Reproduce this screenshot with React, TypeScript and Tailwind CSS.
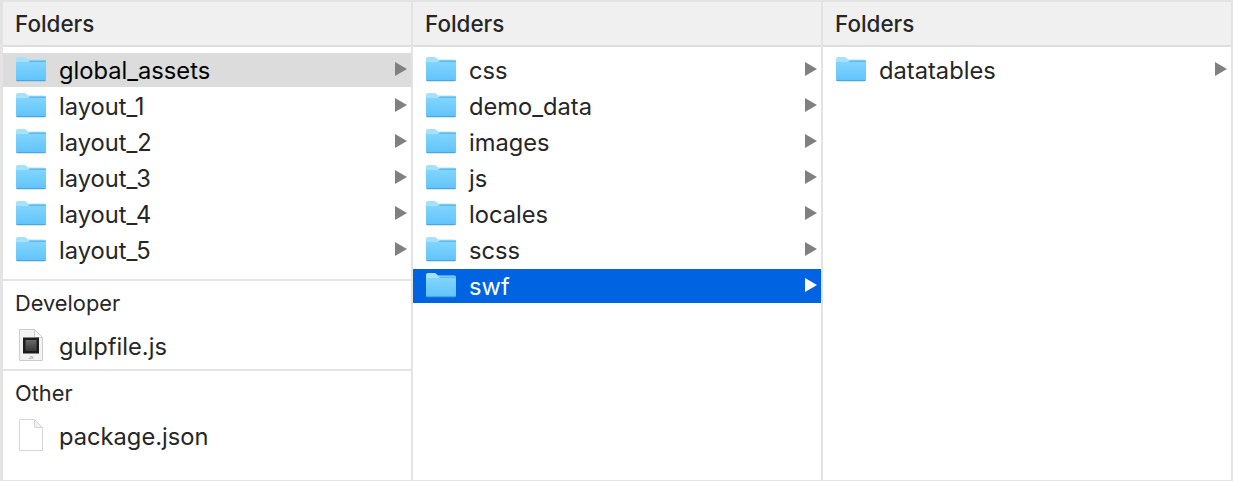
import type { ReactNode } from 'react';

const firstFolders = ['global_assets', 'layout_1', 'layout_2', 'layout_3', 'layout_4', 'layout_5'];
const secondFolders = ['css', 'demo_data', 'images', 'js', 'locales', 'scss', 'swf'];

function FolderIcon() {
  return (
    <svg width="34" height="34" viewBox="3 0 34 34" className="shrink-0">
      <defs>
        <linearGradient id="folderBody" x1="0" y1="0" x2="0" y2="1">
          <stop offset="0" stopColor="#7fd5fd" />
          <stop offset="1" stopColor="#62c3fa" />
        </linearGradient>
      </defs>
      <path d="M4 6c0-1.200.8-2 2-2h6.500c.8 0 1.300.3 1.900.9L16 6.500h16c1.200 0 2 .8 2 2V15H4z" fill="#a6e1fb" />
      <path d="M4 9h30v17c0 1.200-.8 2-2 2H6c-1.200 0-2-.8-2-2z" fill="url(#folderBody)" />
      <path d="M4 9h12.500L18 7.500h16V9H4z" fill="#5ab9ee" />
      <path d="M4 27h30c-.2.800-1 1.300-2 1.300H6c-1 0-1.800-.5-2-1.300z" fill="#4ca6dd" />
    </svg>
  );
}

function JsFileIcon() {
  return (
    <svg width="32" height="34" viewBox="3 0 32 34" className="shrink-0">
      <defs>
        <linearGradient id="jsInner" x1="0" y1="0" x2="0" y2="1">
          <stop offset="0" stopColor="#6a6a6a" />
          <stop offset="1" stopColor="#383838" />
        </linearGradient>
      </defs>
      <path d="M7.500 1.500h15l8 8v23h-23z" fill="#f3f3f3" stroke="#cdcdcd" />
      <path d="M22.500 1.500v8h8z" fill="#fff" stroke="#cdcdcd" />
      <rect x="11" y="9.500" width="16" height="16" fill="#1c1c1c" />
      <rect x="13.500" y="12" width="11" height="11" fill="url(#jsInner)" />
      <text x="19" y="30.500" fontSize="4" textAnchor="middle" fill="#777" fontFamily="Inter, sans-serif">JS</text>
    </svg>
  );
}

function BlankFileIcon() {
  return (
    <svg width="32" height="34" viewBox="3 0 32 34" className="shrink-0">
      <path d="M7.500 1.500h15l8 8v23h-23z" fill="#fff" stroke="#d6d6d6" />
      <path d="M22.500 1.500v8h8z" fill="#f0f0f0" stroke="#d6d6d6" />
    </svg>
  );
}

function Chevron({ light }: { light?: boolean }) {
  return (
    <svg width="12" height="14" viewBox="0 0 12 14" className="mb-[2px] shrink-0">
      <path d="M0 0l12 7-12 7z" fill={light ? '#ffffff' : '#808080'} />
    </svg>
  );
}

function Row({ icon, label, state, arrow }: { icon: ReactNode; label: string; state?: 'muted' | 'active'; arrow?: boolean }) {
  const bg = state === 'muted' ? 'bg-[#dcdcdc]' : state === 'active' ? 'bg-[#0063e1] text-white' : 'text-[#262626]';
  return (
    <div className={`flex h-[34px] items-center pl-[12px] pr-[4px] ${bg}`}>
      <span className="flex w-[44px] shrink-0">{icon}</span>
      <span className="flex-1 pt-[2px] text-[23.7px] leading-[34px]">{label}</span>
      {arrow && <Chevron light={state === 'active'} />}
    </div>
  );
}

function Header() {
  return (
    <div className="h-[45px] shrink-0 border-b-2 border-[#dedede] bg-[#f0f0f0] pl-[12px] text-[22.4px] leading-[44px] font-medium text-[#262626]">
      Folders
    </div>
  );
}

function Section({ title, icon, label }: { title: string; icon: ReactNode; label: string }) {
  return (
    <div className="border-t-2 border-[#e4e4e4] pt-[7px]">
      <div className="h-[32px] pl-[12px] text-[21.800px] leading-[30px] text-[#262626]">{title}</div>
      <div className="flex h-[49px] items-center pl-[12px]">
        <span className="flex w-[44px] shrink-0">{icon}</span>
        <span className="pt-[5px] text-[23.7px] text-[#262626]">{label}</span>
      </div>
    </div>
  );
}

export default function App() {
  return (
    <div className="flex h-[481px] w-[1233px] border-t-2 border-r-2 border-b border-l-[3px] border-[#e3e3e3] bg-white font-['Inter',sans-serif]">
      <div className="flex w-[408px] shrink-0 flex-col">
        <Header />
        <div className="flex flex-col gap-[2px] pt-[6px]">
          {firstFolders.map((name, i) => (
            <Row key={name} icon={<FolderIcon />} label={name} state={i === 0 ? 'muted' : undefined} arrow />
          ))}
        </div>
        <div className="mt-[12px]">
          <Section title="Developer" icon={<JsFileIcon />} label="gulpfile.js" />
          <Section title="Other" icon={<BlankFileIcon />} label="package.json" />
        </div>
      </div>
      <div className="flex w-[410px] shrink-0 flex-col border-l-2 border-[#e3e3e3]">
        <Header />
        <div className="flex flex-col gap-[2px] pt-[6px]">
          {secondFolders.map((name) => (
            <Row key={name} icon={<FolderIcon />} label={name} state={name === 'swf' ? 'active' : undefined} arrow />
          ))}
        </div>
      </div>
      <div className="flex flex-1 flex-col border-l-2 border-[#e3e3e3]">
        <Header />
        <div className="flex flex-col gap-[2px] pt-[6px]">
          <Row icon={<FolderIcon />} label="datatables" arrow />
        </div>
      </div>
    </div>
  );
}
